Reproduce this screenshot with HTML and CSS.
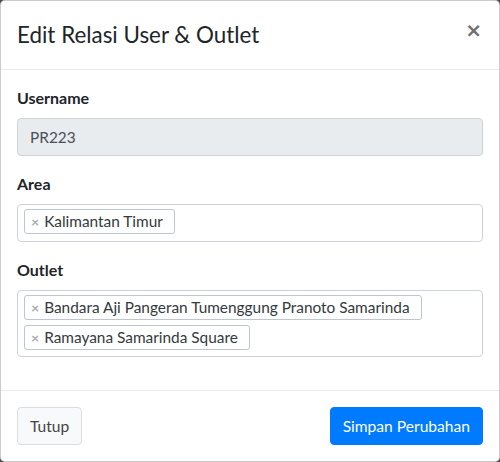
FILE: index.html
```html
<!DOCTYPE html>
<html lang="id">
<head>
<meta charset="utf-8">
<title>Edit Relasi User &amp; Outlet</title>
<link rel="stylesheet" href="styles.css">
</head>
<body>
<div class="modal">
  <div class="modal-header">
    <h4 class="modal-title">Edit Relasi User &amp; Outlet</h4>
    <button class="close" type="button" aria-label="Close">&times;</button>
  </div>
  <div class="modal-body">
    <div class="form-group">
      <label class="label">Username</label>
      <div class="input readonly">PR223</div>
    </div>
    <div class="form-group">
      <label class="label">Area</label>
      <div class="select">
        <span class="tag"><span class="tag-x">&times;</span>Kalimantan Timur</span>
      </div>
    </div>
    <div class="form-group">
      <label class="label">Outlet</label>
      <div class="select">
        <span class="tag"><span class="tag-x">&times;</span>Bandara Aji Pangeran Tumenggung Pranoto Samarinda</span>
        <span class="tag"><span class="tag-x">&times;</span>Ramayana Samarinda Square</span>
      </div>
    </div>
  </div>
  <div class="modal-footer">
    <button class="btn btn-default" type="button">Tutup</button>
    <button class="btn btn-primary" type="button">Simpan Perubahan</button>
  </div>
</div>
</body>
</html>
```
FILE: styles.css
```css
* { box-sizing: border-box; }
html, body { margin: 0; height: 100%; }
body {
  background: #4a4a4a;
  font-family: Lato, "Noto Sans", sans-serif;
  font-size: 16px;
  line-height: 1.5;
  color: #212529;
}
.modal {
  width: 500px;
  height: 462px;
  background: #fff;
  border: 1px solid rgba(0,0,0,.2);
  border-radius: 5px;
  display: flex;
  flex-direction: column;
}
.modal-header {
  display: flex;
  justify-content: space-between;
  align-items: flex-start;
  padding: 16px;
  border-bottom: 1px solid #e9ecef;
}
.modal-title {
  margin: 0;
  font-size: 22.4px;
  font-weight: 400;
  line-height: 36px;
  color: #212529;
}
.close {
  background: none;
  border: 0;
  padding: 0;
  margin: 1px 1px 0 0;
  font-family: "DejaVu Sans", sans-serif;
  font-size: 20px;
  font-weight: 700;
  line-height: 24px;
  color: #6f6f6f;
}
.modal-body {
  padding: 16px;
  flex: 1;
}
.form-group { margin-bottom: 16px; }
.label {
  display: block;
  font-weight: 700;
  margin-bottom: 8px;
}
.input {
  height: 38px;
  padding: 6px 12px;
  border: 1px solid #ced4da;
  border-radius: 4px;
  color: #495057;
  font-size: 15.4px;
  line-height: 24px;
}
.readonly { background: #e9ecef; }
.select {
  min-height: 38px;
  border: 1px solid #ced4da;
  border-radius: 4px;
  padding: 4px 6px 6px;
  display: flex;
  flex-wrap: wrap;
  align-items: flex-start;
  gap: 5px;
}
.tag {
  display: inline-flex;
  align-items: center;
  height: 25px;
  border: 1px solid #bdc6d0;
  border-radius: 3px;
  padding: 0 11px 0 0;
  color: #343a40;
  font-size: 15.4px;
  line-height: 23px;
}
.tag-x {
  color: #a6adb5;
  font-weight: 700;
  font-size: 14px;
  padding: 0 5px 0 6px;
}
.modal-footer {
  display: flex;
  justify-content: space-between;
  align-items: center;
  padding: 12px;
  border-top: 1px solid #e9ecef;
}
.btn {
  margin: 4px;
  height: 38px;
  padding: 6px 12px;
  font-family: inherit;
  font-size: 15.6px;
  line-height: 24px;
  border-radius: 4px;
  border: 1px solid transparent;
}
.btn-default {
  background: #f8f9fa;
  border-color: #ddd;
  color: #444;
}
.btn-primary {
  background: #007bff;
  border-color: #007bff;
  color: #fff;
}
```
